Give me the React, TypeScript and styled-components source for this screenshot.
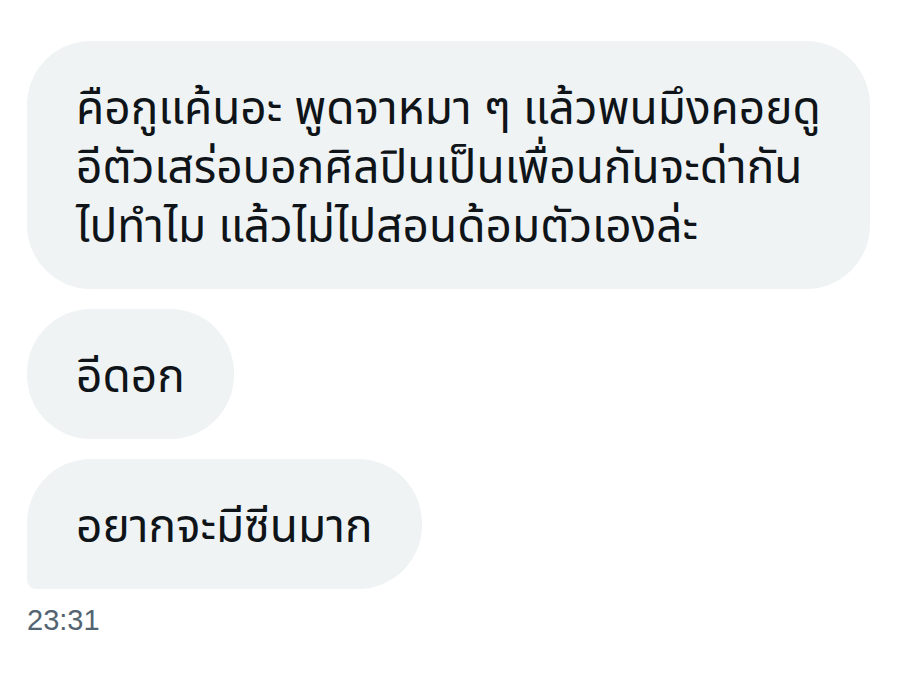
import React from "react";
import styled, { createGlobalStyle } from "styled-components";

const Global = createGlobalStyle`
  html, body { margin: 0; padding: 0; background: #ffffff; }
  body { font-family: "Noto Sans Thai", "Noto Sans", "Liberation Sans", sans-serif; }
`;

const Page = styled.div`
  display: flex;
  flex-direction: column;
  align-items: flex-start;
  padding: 41px 44px 0 27px;
  gap: 20px;
`;

const Bubble = styled.div<{ $last?: boolean }>`
  background: #eff3f4;
  color: #0f1419;
  border-radius: 64px;
  border-bottom-left-radius: ${(p) => (p.$last ? "9px" : "64px")};
  padding: 40px 49px 31px 49px;
  font-size: 46px;
  line-height: 59px;
`;

const Line = styled.div`
  white-space: nowrap;
`;

const Time = styled.div`
  margin-top: -6px;
  font-family: "Liberation Sans", Arial, sans-serif;
  font-size: 29px;
  line-height: 34px;
  color: #536471;
`;

export default function App() {
  return (
    <>
      <Global />
      <Page>
        <Bubble>
          <Line>คือกูแค้นอะ พูดจาหมา ๆ แล้วพนมึงคอยดู</Line>
          <Line>อีตัวเสร่อบอกศิลปินเป็นเพื่อนกันจะด่ากัน</Line>
          <Line>ไปทำไม แล้วไม่ไปสอนด้อมตัวเองล่ะ</Line>
        </Bubble>
        <Bubble>
          <Line>อีดอก</Line>
        </Bubble>
        <Bubble $last>
          <Line>อยากจะมีซีนมาก</Line>
        </Bubble>
        <Time>23:31</Time>
      </Page>
    </>
  );
}
